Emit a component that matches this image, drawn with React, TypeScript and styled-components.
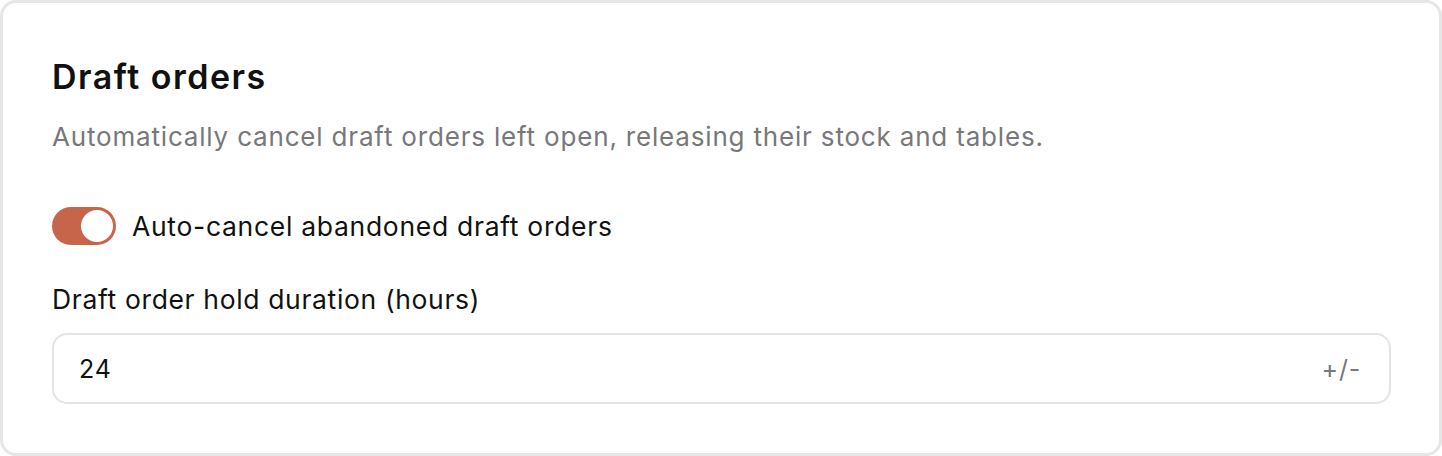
import React from 'react';
import styled, { createGlobalStyle } from 'styled-components';

const GlobalStyle = createGlobalStyle`
  html, body {
    margin: 0;
    padding: 0;
    background: #ffffff;
  }
  body {
    font-family: Inter, 'Noto Sans', sans-serif;
    color: #111111;
  }
`;

const Card = styled.section`
  box-sizing: border-box;
  width: 1442px;
  height: 456px;
  border: 3px solid #e6e6e6;
  border-radius: 16px;
  background: #fff;
  padding: 54px 49px 0 49px;
  display: flex;
  flex-direction: column;
`;

const Title = styled.h2`
  margin: 0;
  font-size: 34px;
  line-height: 40px;
  font-weight: 600;
  color: #111;
  letter-spacing: 1.5px;
`;

const Subtitle = styled.p`
  margin: 23px 0 0 0;
  font-size: 26px;
  line-height: 34px;
  color: #77777c;
  letter-spacing: 0.82px;
`;

const ToggleRow = styled.label`
  margin-top: 53px;
  display: flex;
  align-items: center;
  gap: 16px;
  cursor: pointer;
`;

const Track = styled.span<{ $on: boolean }>`
  box-sizing: border-box;
  width: 64px;
  height: 38px;
  border-radius: 19px;
  padding: 3px;
  background: ${p => (p.$on ? '#c7654b' : '#d4d4d8')};
  display: flex;
  justify-content: ${p => (p.$on ? 'flex-end' : 'flex-start')};
`;

const Knob = styled.span`
  width: 32px;
  height: 32px;
  border-radius: 50%;
  background: #fff;
`;

const ToggleText = styled.span`
  font-size: 26.5px;
  line-height: 38px;
  font-weight: 400;
  color: #111;
  letter-spacing: 0.7px;
`;

const FieldLabel = styled.div`
  margin-top: 37px;
  font-size: 26.5px;
  line-height: 34px;
  font-weight: 400;
  color: #111;
  letter-spacing: 0.65px;
`;

const InputBox = styled.div`
  box-sizing: border-box;
  margin-top: 17px;
  width: 1339px;
  height: 71px;
  border: 2px solid #e4e4e7;
  border-radius: 15px;
  display: flex;
  align-items: center;
  padding: 0 28px 0 25px;
`;

const Value = styled.span`
  flex: 1;
  font-size: 25px;
  color: #111;
  letter-spacing: 0.8px;
`;

const Suffix = styled.span`
  font-size: 25px;
  color: #77777c;
  letter-spacing: 0.8px;
`;

export default function App() {
  return (
    <>
      <GlobalStyle />
      <Card>
        <Title>Draft orders</Title>
        <Subtitle>
          Automatically cancel draft orders left open, releasing their stock and tables.
        </Subtitle>
        <ToggleRow>
          <Track $on={true}>
            <Knob />
          </Track>
          <ToggleText>Auto-cancel abandoned draft orders</ToggleText>
        </ToggleRow>
        <FieldLabel>Draft order hold duration (hours)</FieldLabel>
        <InputBox>
          <Value>24</Value>
          <Suffix>+/-</Suffix>
        </InputBox>
      </Card>
    </>
  );
}
